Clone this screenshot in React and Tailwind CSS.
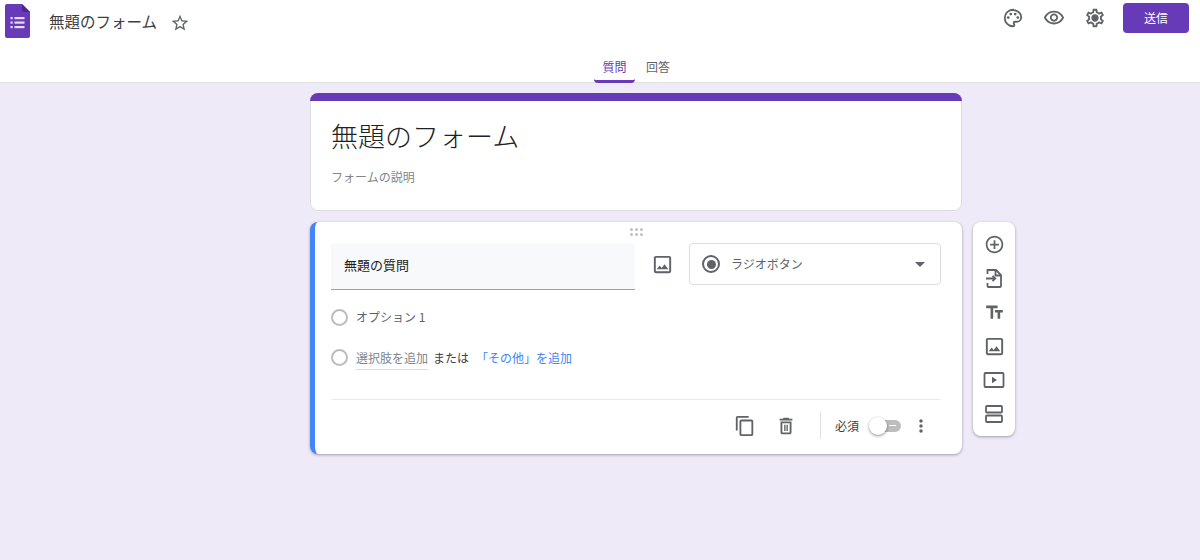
const jp = "font-['Noto_Sans_CJK_JP','Noto_Sans',sans-serif]";

const Icon = ({ d, size = 24, className = 'fill-[#5f6368]', children }) => (
  <svg viewBox="0 0 24 24" width={size} height={size} className={className}>
    {d && <path d={d} />}
    {children}
  </svg>
);

const icons = {
  star: 'M22 9.24l-7.19-.62L12 2 9.19 8.63 2 9.24l5.46 4.73L5.82 21 12 17.27 18.18 21l-1.63-7.03L22 9.24zM12 15.4l-3.76 2.27 1-4.28-3.32-2.88 4.38-.38L12 6.1l1.71 4.04 4.38.38-3.32 2.88 1 4.28L12 15.4z',
  eye: 'M12 6c3.79 0 7.17 2.13 8.82 5.5C19.17 14.87 15.79 17 12 17s-7.17-2.13-8.82-5.5C4.83 8.13 8.21 6 12 6m0-2C7 4 2.73 7.11 1 11.5 2.73 15.89 7 19 12 19s9.27-3.11 11-7.5C21.27 7.11 17 4 12 4zm0 5c1.38 0 2.5 1.12 2.5 2.5S13.38 14 12 14s-2.5-1.12-2.5-2.5S10.62 9 12 9m0-2c-2.48 0-4.5 2.02-4.5 4.5S9.52 16 12 16s4.5-2.02 4.5-4.5S14.48 7 12 7z',
  gear: 'M19.43 12.98c.04-.32.07-.64.07-.98 0-.34-.03-.66-.07-.98l2.11-1.65c.19-.15.24-.42.12-.64l-2-3.46c-.09-.16-.26-.25-.44-.25-.06 0-.12.01-.17.03l-2.49 1c-.52-.4-1.08-.73-1.69-.98l-.38-2.65C14.46 2.18 14.25 2 14 2h-4c-.25 0-.46.18-.49.42l-.38 2.65c-.61.25-1.17.59-1.69.98l-2.49-1c-.06-.02-.12-.03-.18-.03-.17 0-.34.09-.43.25l-2 3.46c-.13.22-.07.49.12.64l2.11 1.65c-.04.32-.07.65-.07.98 0 .33.03.66.07.98l-2.11 1.65c-.19.15-.24.42-.12.64l2 3.46c.09.16.26.25.44.25.06 0 .12-.01.17-.03l2.49-1c.52.4 1.08.73 1.69.98l.38 2.65c.03.24.24.42.49.42h4c.25 0 .46-.18.49-.42l.38-2.65c.61-.25 1.17-.59 1.69-.98l2.49 1c.06.02.12.03.18.03.17 0 .34-.09.43-.25l2-3.46c.12-.22.07-.49-.12-.64l-2.11-1.65zm-1.98-1.71c.04.31.05.52.05.73 0 .21-.02.43-.05.73l-.14 1.13.89.7 1.08.84-.7 1.21-1.27-.51-1.04-.42-.9.68c-.43.32-.84.56-1.25.73l-1.06.43-.16 1.13-.2 1.35h-1.4l-.19-1.35-.16-1.13-1.06-.43c-.43-.18-.83-.41-1.23-.71l-.91-.7-1.06.43-1.27.51-.7-1.21 1.08-.84.89-.7-.14-1.13c-.03-.31-.05-.54-.05-.74s.02-.43.05-.73l.14-1.13-.89-.7-1.08-.84.7-1.21 1.27.51 1.04.42.9-.68c.43-.32.84-.56 1.25-.73l1.06-.43.16-1.13.2-1.35h1.39l.19 1.35.16 1.13 1.06.43c.43.18.83.41 1.23.71l.91.7 1.06-.43 1.27-.51.7 1.21-1.07.85-.89.7.14 1.13zM12 8c-2.21 0-4 1.79-4 4s1.79 4 4 4 4-1.79 4-4-1.79-4-4-4z',
  add: 'M13 7h-2v4H7v2h4v4h2v-4h4v-2h-4V7zm-1-5C6.48 2 2 6.48 2 12s4.48 10 10 10 10-4.48 10-10S17.52 2 12 2zm0 18c-4.41 0-8-3.59-8-8s3.59-8 8-8 8 3.59 8 8-3.59 8-8 8z',
  title: 'M2.5 4v3h5v12h3V7h5V4h-13zm19 5h-9v3h3v7h3v-7h3V9z',
  image: 'M19 5v14H5V5h14m0-2H5c-1.1 0-2 .9-2 2v14c0 1.1.9 2 2 2h14c1.1 0 2-.9 2-2V5c0-1.1-.9-2-2-2zm-4.86 8.86l-3 3.87L9 13.14 6 17h12l-3.86-5.14z',
  copy: 'M16 1H4c-1.1 0-2 .9-2 2v14h2V3h12V1zm3 4H8c-1.1 0-2 .9-2 2v14c0 1.1.9 2 2 2h11c1.1 0 2-.9 2-2V7c0-1.1-.9-2-2-2zm0 16H8V7h11v14z',
  trash: 'M6 19c0 1.1.9 2 2 2h8c1.1 0 2-.9 2-2V7H6v12zM8 9h8v10H8V9zm7.5-5l-1-1h-5l-1 1H5v2h14V4zM10 10.5h1.5v7H10zM12.5 10.5H14v7h-1.5z',
  more: 'M12 8c1.1 0 2-.9 2-2s-.9-2-2-2-2 .9-2 2 .9 2 2 2zm0 2c-1.1 0-2 .9-2 2s.9 2 2 2 2-.9 2-2-.9-2-2-2zm0 6c-1.1 0-2 .9-2 2s.9 2 2 2 2-.9 2-2-.9-2-2-2z',
};

const Palette = () => (
  <svg viewBox="0 0 24 24" width={22} height={22} className="fill-none stroke-[#5f6368] stroke-2">
    <path d="M12 3a9 9 0 0 0 0 18c.9 0 1.5-.6 1.5-1.4 0-.4-.2-.7-.4-1-.3-.3-.4-.6-.4-1 0-.8.7-1.5 1.5-1.5H16c2.8 0 5-2.2 5-5 0-4.2-4-7.6-9-7.6z" />
    <g className="fill-[#5f6368] stroke-none">
      <circle cx="6.8" cy="11.5" r="1.5" />
      <circle cx="9.6" cy="7.7" r="1.5" />
      <circle cx="14.4" cy="7.7" r="1.5" />
      <circle cx="17.2" cy="11.5" r="1.5" />
    </g>
  </svg>
);

const ImportIcon = () => (
  <svg viewBox="0 0 24 24" width={24} height={24} className="fill-none stroke-[#5f6368] stroke-[1.8]">
    <path d="M5.5 8V4H14l5 5v11a1 1 0 0 1-1 1H6.5a1 1 0 0 1-1-1v-3" />
    <path d="M13.5 4v5.5H19" />
    <path d="M4 12.5h9M10.5 9.8l2.8 2.7-2.8 2.7" />
  </svg>
);

const VideoIcon = () => (
  <svg viewBox="0 0 24 24" width={24} height={24}>
    <rect x="2.5" y="5" width="19" height="14" rx="1" className="fill-none stroke-[#5f6368] stroke-[1.8]" />
    <path d="M10 8.8v6.4l5-3.2z" className="fill-[#5f6368]" />
  </svg>
);

const SectionIcon = () => (
  <svg viewBox="0 0 24 24" width={24} height={24} className="fill-none stroke-[#5f6368] stroke-[1.8]">
    <rect x="4" y="4" width="16" height="6.5" rx="1" />
    <rect x="4" y="13.5" width="16" height="6.5" rx="1" />
  </svg>
);

const Logo = () => (
  <svg viewBox="0 0 25 34" width={25} height={34}>
    <path d="M2 0h15l8 8v24a2 2 0 0 1-2 2H2a2 2 0 0 1-2-2V2a2 2 0 0 1 2-2z" className="fill-[#673ab7]" />
    <path d="M17 0l8 8h-6a2 2 0 0 1-2-2z" className="fill-[#4a2a8f]" />
    <g className="fill-[#e4daf3]">
      <rect x="5.5" y="13" width="2.2" height="2.2" />
      <rect x="9.5" y="13" width="10" height="2.2" />
      <rect x="5.5" y="17.5" width="2.2" height="2.2" />
      <rect x="9.5" y="17.5" width="10" height="2.2" />
      <rect x="5.5" y="22" width="2.2" height="2.2" />
      <rect x="9.5" y="22" width="10" height="2.2" />
    </g>
  </svg>
);

const Radio = () => <span className="block w-[17px] h-[17px] rounded-full border-2 border-[#bdbdbd] shrink-0" />;

export default function App() {
  return (
    <div className={`${jp} h-[560px] bg-[#eeeaf8] flex flex-col overflow-hidden`}>
      <header className="h-[83px] bg-white border-b border-[#e0e0e0] shrink-0">
        <div className="h-[46px] flex pt-[4px] pl-[5px] pr-[11px]">
          <Logo />
          <span className="ml-[19px] mt-[7px] text-[15.5px] leading-[20px] text-[#3c4043] whitespace-nowrap">無題のフォーム</span>
          <span className="ml-[13px] mt-[9px] h-[20px]"><Icon d={icons.star} size={20} /></span>
          <div className="ml-auto flex items-start -mt-[1px]">
            <div className="flex items-center gap-[19px] h-[30px] mr-[17px]">
              <Palette />
              <Icon d={icons.eye} size={22} />
              <Icon d={icons.gear} size={22} />
            </div>
            <button className="w-[66px] h-[30px] bg-[#673ab7] rounded text-white text-[12px]">送信</button>
          </div>
        </div>
        <div className="w-[652px] ml-[310px] h-[37px] flex justify-center">
          <div className="w-[41px] mr-[3px] text-center text-[12px] leading-[17px] pt-[12px] text-[#673ab7] border-b-[3px] border-[#673ab7] rounded-b-sm">質問</div>
          <div className="w-[40px] text-center text-[12px] leading-[17px] pt-[12px] text-[#5f6368]">回答</div>
        </div>
      </header>

      <main className="flex gap-[11px] pl-[310px] pt-[10px] items-start">
        <div className="w-[652px] flex flex-col gap-[11px]">
          {/* Title card */}
          <section className="h-[118px] bg-white rounded-lg shadow-[inset_0_0_0_1px_#dadce0] overflow-hidden">
            <div className="h-[8px] bg-[#673ab7]" />
            <h1 className="ml-[21px] mt-[15px] text-[27px] leading-[40px] font-light text-[#202124]">無題のフォーム</h1>
            <p className="ml-[21px] mt-[12px] text-[12px] leading-[18px] text-[#80868b]">フォームの説明</p>
          </section>

          {/* Question card */}
          <section className="relative h-[232px] bg-white rounded-lg border-l-[5px] border-[#4285f4] shadow-[0_1px_3px_rgba(60,64,67,0.45)] pl-[16px] pr-[21px] pt-[21px]">
            <div className="absolute top-[6px] left-[315px] grid grid-cols-3 gap-[2px]">
              {[0, 1, 2, 3, 4, 5].map(i => <span key={i} className="w-[3px] h-[3px] rounded-full bg-[#bdc1c6]" />)}
            </div>
            <div className="flex items-start">
              <div className="w-[304px] h-[47px] bg-[#f8f9fa] border-b border-[#9aa0a6] rounded-t pl-[13px] pt-[12px] text-[13px] leading-[20px] text-[#202124]">無題の質問</div>
              <div className="w-[54px] h-[42px] flex items-center justify-center">
                <Icon d={icons.image} size={23} />
              </div>
              <div className="w-[252px] h-[42px] border border-[#dadce0] rounded flex items-center pl-[12px] pr-[15px]">
                <span className="block w-[18px] h-[18px] rounded-full border-2 border-[#5f6368] p-[2.5px] shrink-0">
                  <span className="block w-full h-full rounded-full bg-[#5f6368]" />
                </span>
                <span className="ml-[11px] text-[12px] text-[#5f6368]">ラジオボタン</span>
                <span className="ml-auto w-0 h-0 border-x-[5px] border-x-transparent border-t-[5px] border-t-[#5f6368]" />
              </div>
            </div>

            <div className="mt-[18px] h-[18px] flex items-center">
              <Radio />
              <span className="ml-[8px] text-[12px] text-[#5f6368] whitespace-nowrap">オプション 1</span>
            </div>

            <div className="mt-[23px] h-[18px] flex items-start text-[12px] leading-[18px] whitespace-nowrap">
              <Radio />
              <span className="ml-[8px] h-[21px] text-[#80868b] border-b border-[#dadce0]">選択肢を追加</span>
              <span className="ml-[5px] text-[#3c4043]">または</span>
              <span className="ml-[7px] text-[#4285f4]">「その他」を追加</span>
            </div>

            <div className="mt-[32px] border-t border-[#e8eaed] flex items-center h-[52px]">
              <span className="ml-[403px]"><Icon d={icons.copy} size={22} /></span>
              <span className="ml-[19px]"><Icon d={icons.trash} size={22} /></span>
              <span className="ml-[23px] w-px h-[27px] bg-[#e0e0e0]" />
              <span className="ml-[14px] text-[12px] text-[#3c4043]">必須</span>
              <span className="relative ml-[10px] w-[32px] h-[18px] flex items-center">
                <span className="absolute left-[8px] right-0 h-[12px] rounded-full bg-[#bdbdbd]" />
                <span className="absolute left-[20px] w-[7px] h-px bg-white" />
                <span className="absolute left-0 w-[18px] h-[18px] rounded-full bg-white shadow-[0_1px_3px_rgba(0,0,0,0.45)]" />
              </span>
              <span className="ml-[10px]"><Icon d={icons.more} size={20} /></span>
            </div>
          </section>
        </div>

        {/* Side toolbar */}
        <aside className="mt-[129px] w-[42px] h-[214px] bg-white rounded-lg shadow-[0_1px_3px_rgba(60,64,67,0.45)] flex flex-col items-center pt-[5px]">
          {[
            <Icon d={icons.add} size={21} />,
            <ImportIcon />,
            <Icon d={icons.title} size={21} />,
            <Icon d={icons.image} size={23} />,
            <VideoIcon />,
            <SectionIcon />,
          ].map((el, i) => <div key={i} className="h-[34px] flex items-center justify-center">{el}</div>)}
        </aside>
      </main>
    </div>
  );
}
